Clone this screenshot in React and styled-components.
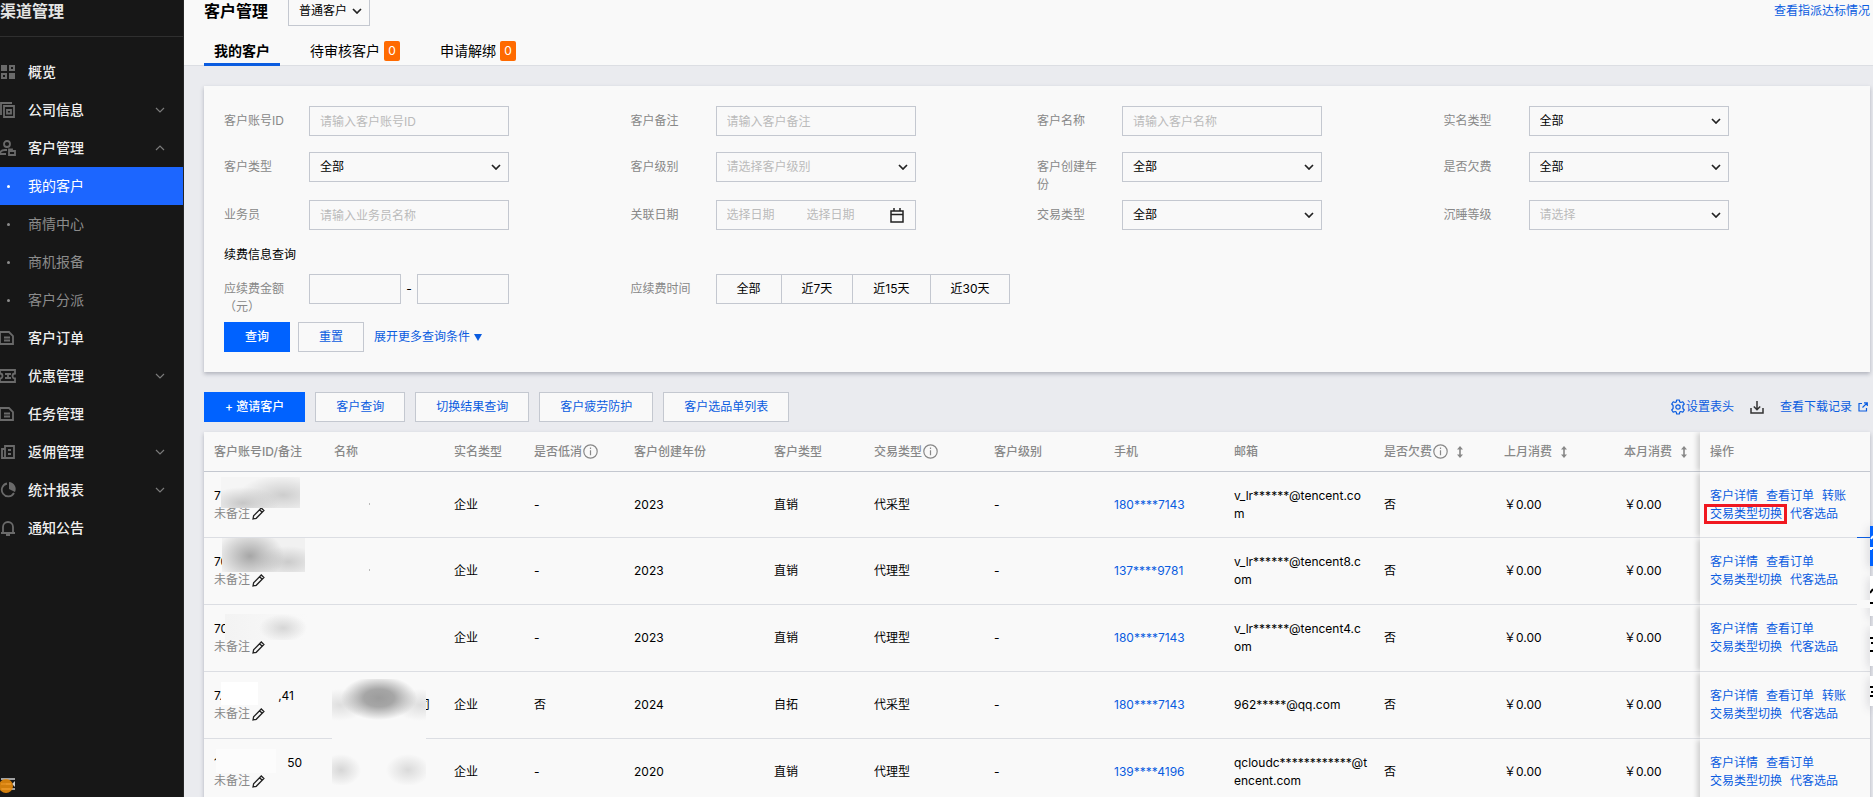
import React from "react";
import styled, { createGlobalStyle, css } from "styled-components";

const link = "#0a5ce0";
const primary = "#0062ff";
const border = "#c4c8d0";
const panel = "#f9f9f9";

const menu = [
  { icon: "grid", text: "概览" },
  { icon: "copy", text: "公司信息", arrow: "down" },
  { icon: "user", text: "客户管理", arrow: "up" },
  { sub: true, text: "我的客户", active: true },
  { sub: true, text: "商情中心" },
  { sub: true, text: "商机报备" },
  { sub: true, text: "客户分派" },
  { icon: "doc", text: "客户订单" },
  { icon: "ticket", text: "优惠管理", arrow: "down" },
  { icon: "doc", text: "任务管理" },
  { icon: "book", text: "返佣管理", arrow: "down" },
  { icon: "pie", text: "统计报表", arrow: "down" },
  { icon: "bell", text: "通知公告" },
];

const fields = [
  { id: "accountId", label: "客户账号ID", placeholder: "请输入客户账号ID" },
  { id: "remark", label: "客户备注", placeholder: "请输入客户备注" },
  { id: "name", label: "客户名称", placeholder: "请输入客户名称" },
  { id: "authType", label: "实名类型", select: "全部" },
  { id: "customerType", label: "客户类型", select: "全部" },
  { id: "level", label: "客户级别", select: "请选择客户级别", muted: true },
  { id: "year", label: "客户创建年份", select: "全部" },
  { id: "arrears", label: "是否欠费", select: "全部" },
  { id: "salesman", label: "业务员", placeholder: "请输入业务员名称" },
  { id: "linkDate", label: "关联日期", date: true },
  { id: "tradeType", label: "交易类型", select: "全部" },
  { id: "sleepLevel", label: "沉睡等级", select: "请选择", muted: true },
];

const columns = [
  { title: "客户账号ID/备注", width: 120 },
  { title: "名称", width: 120 },
  { title: "实名类型", width: 80 },
  { title: "是否低消", width: 100, info: true },
  { title: "客户创建年份", width: 140 },
  { title: "客户类型", width: 100 },
  { title: "交易类型", width: 120, info: true },
  { title: "客户级别", width: 120 },
  { title: "手机", width: 120 },
  { title: "邮箱", width: 150 },
  { title: "是否欠费", width: 120, info: true, sort: true },
  { title: "上月消费", width: 120, sort: true },
  { title: "本月消费", width: 86, sort: true },
];

const blob = (x, y, w, h, color) =>
  `radial-gradient(${w}px ${h}px at ${x}px ${y}px, ${color}, transparent)`;

const rows = [
  {
    id: ["7"],
    mask: { x: 17, y: 5, w: 79, h: 31, bg: `${blob(22, 26, 36, 16, "#c6c6c6")}, ${blob(62, 18, 44, 20, "#cdcdcd")}, #f5f5f5` },
    nameMask: { x: 45, y: 31, w: 1, h: 2, bg: "#bbb" },
    low: "-", year: "2023", type: "直销", trade: "代采型",
    phone: "180****7143", mail: "v_lr******@tencent.co\nm", transfer: true, marked: true,
  },
  {
    id: ["70"],
    mask: { x: 18, y: 0, w: 83, h: 34, bg: `${blob(28, 18, 34, 26, "#a6a6a6")}, ${blob(66, 24, 32, 16, "#cbcbcb")}, #f1f1f1` },
    nameMask: { x: 45, y: 31, w: 1, h: 2, bg: "#bbb" },
    low: "-", year: "2023", type: "直销", trade: "代理型",
    phone: "137****9781", mail: "v_lr******@tencent8.c\nom",
  },
  {
    id: ["70"],
    mask: { x: 21, y: 9, w: 82, h: 26, bg: `${blob(58, 14, 24, 14, "#d6d6d6")}, linear-gradient(90deg, #f3f3f3, ${panel})` },
    low: "-", year: "2023", type: "直销", trade: "代理型",
    phone: "180****7143", mail: "v_lr******@tencent4.c\nom",
  },
  {
    id: ["7.", ",41"], idWidth: 80,
    mask: { x: 17, y: 10, w: 37, h: 23, bg: "#ffffff" },
    name: "司",
    nameMask: {
      x: 8, y: 7, w: 94, h: 106,
      bg: `${blob(47, 19, 38, 22, "#9c9c9c, #a6a6a6 40%")}, ${blob(8, 26, 26, 16, "#dedede")}, ${blob(88, 26, 26, 16, "#dedede")}, ${blob(9, 91, 20, 16, "#d6d6d6")}, ${blob(76, 91, 22, 16, "#dadada")}, ${panel}`,
    },
    low: "否", year: "2024", type: "自拓", trade: "代采型",
    phone: "180****7143", mail: "962*****@qq.com", transfer: true,
  },
  {
    id: ["1", "50"], idWidth: 88,
    mask: { x: 12, y: 10, w: 60, h: 24, bg: "#fcfcfc" },
    low: "-", year: "2020", type: "直销", trade: "代理型",
    phone: "139****4196", mail: "qcloudc************@t\nencent.com",
  },
];

const menuIcons = {
  grid: (
    <>
      <path d="M1 1h6v6H1zM9 9h6v6H9z" fill="currentColor" stroke="none" />
      <path d="M10 2h4v4h-4zM2 10h4v4H2z" strokeWidth="2" />
    </>
  ),
  copy: (
    <>
      <path d="M1 13V1h11" />
      <path d="M4 4h10v11H4zM7 8h4v3.500H7z" />
    </>
  ),
  user: (
    <>
      <circle cx="7" cy="4" r="3" />
      <path d="M6 14H0c0-3 2-4 5-4h2M9 11h6v4H9zM9 11V9.500h3V11" />
    </>
  ),
  doc: <path d="M0 2h9l4 4v8H0zM4 7.500h6M4 10.500h6" />,
  ticket: <path d="M0 2h15v3.500a2.500 2.500 0 0 0 0 5V14H0v-3.500a2.500 2.500 0 0 0 0-5zM5 6h6M5 10h6M8 6v4" />,
  book: <path d="M5 2h9v12H5zM5 5H2v9h3M8 6h3M8 10h3" />,
  pie: (
    <>
      <path d="M7 1.500A6.500 6.500 0 1 0 14 11" />
      <path d="M9 0a7 7 0 0 1 6 10L9 7z" fill="currentColor" stroke="none" />
    </>
  ),
  bell: <path d="M1 13h14M3 13V7a5 5 0 0 1 10 0v6M6 15h4" />,
};

const MenuIcon = ({ name }) => (
  <svg width="16" height="16" viewBox="0 0 16 16" fill="none" stroke="currentColor" strokeWidth="1.800">
    {menuIcons[name]}
  </svg>
);

const Chevron = ({ up, width = 1.5 }) => (
  <svg width="10" height="6" viewBox="0 0 10 6" fill="none" stroke="currentColor" strokeWidth={width}>
    <path d={up ? "M1 5l4-4 4 4" : "M1 1l4 4 4-4"} />
  </svg>
);

const InfoIcon = () => (
  <svg width="15" height="15" viewBox="0 0 15 15" fill="none" stroke="currentColor" strokeWidth="1.200">
    <circle cx="7.500" cy="7.500" r="6.700" />
    <path d="M7.500 6.300v5M7.500 3.500v1.500" />
  </svg>
);

const SortIcon = () => (
  <svg width="6" height="12" viewBox="0 0 6 12" fill="currentColor">
    <path d="M3 0l3 3.500H3.800v5H6L3 12 0 8.500h2.200v-5H0z" />
  </svg>
);

const PencilIcon = () => (
  <svg width="13" height="13" viewBox="0 0 13 13" fill="none" stroke="#222" strokeWidth="1.300">
    <path d="M1 12l.6-3.200L9.300 1l2.600 2.500-7.700 7.800zM7.600 2.700l2.600 2.600" />
  </svg>
);

const CalendarIcon = () => (
  <svg width="14" height="15" viewBox="0 0 14 15" fill="none" stroke="#222" strokeWidth="1.500">
    <path d="M1 3h12v11H1zM1 6.500h12M4 0v3M10 0v3" />
  </svg>
);

const GearIcon = () => (
  <svg width="16" height="16" viewBox="0 0 16 16" fill="none" stroke="currentColor" strokeWidth="1.200" strokeLinejoin="round">
    <path d="M6.700 1h2.600l.5 2 1 .500 2-.700 1.500 2.200L12.900 6.500v3l1.400 1.500-1.500 2.200-2-.700-1 .500-.5 2H6.700l-.5-2-1-.500-2 .700L1.700 11l1.400-1.500v-3L1.700 5l1.500-2.200 2 .700 1-.500z" />
    <circle cx="8" cy="8" r="2.200" />
  </svg>
);

const DownloadIcon = () => (
  <svg width="14" height="13" viewBox="0 0 14 13" fill="none" stroke="currentColor" strokeWidth="1.500">
    <path d="M1 7v5h12V7M7 0v8.500M3.800 5.500L7 8.700l3.200-3.200" />
  </svg>
);

const ExternalIcon = () => (
  <svg width="10" height="10" viewBox="0 0 10 10" fill="none" stroke="currentColor" strokeWidth="1.200">
    <path d="M4 1.500H1v7.500h7.500V6M6 .8h3.300v3.300M9.200.8L4.500 5.500" />
  </svg>
);

const SelectBox = ({ id, value, muted }) => (
  <SelectWrap>
    <Select id={id} $muted={muted} defaultValue={value} aria-label={id ? undefined : value}>
      <option>{value}</option>
    </Select>
    <Chevron width={1.7} />
  </SelectWrap>
);

const Field = ({ field }) => (
  <FieldRow>
    <Label htmlFor={field.id}>{field.label}</Label>
    <Control>
      {field.select && <SelectBox id={field.id} value={field.select} muted={field.muted} />}
      {field.placeholder && <Input id={field.id} placeholder={field.placeholder} />}
      {field.date && (
        <DateRange>
          <input id={field.id} placeholder="选择日期" />
          <input aria-label="结束日期" placeholder="选择日期" />
          <CalendarIcon />
        </DateRange>
      )}
    </Control>
  </FieldRow>
);

const Sidebar = () => (
  <Side>
    <SideTitle>渠道管理</SideTitle>
    <Menu>
      {menu.map((item) => (
        <MenuItem key={item.text} href="#" $sub={item.sub} $active={item.active}>
          <MenuMark>{item.sub ? <Dot $active={item.active} /> : <MenuIcon name={item.icon} />}</MenuMark>
          <span>{item.text}</span>
          {item.arrow && <Chevron up={item.arrow === "up"} width={1.2} />}
        </MenuItem>
      ))}
    </Menu>
    <Collapse aria-label="收起">
      <svg width="16" height="18" viewBox="0 0 16 18">
        <path d="M1 3h14M6 8h5M1 13h14" stroke="#d0d0d0" strokeWidth="1.500" />
        <path d="M15 5v6l-3-3z" fill="#d0d0d0" />
        <circle cx="6" cy="10" r="7" fill="#e58a0c" fillOpacity="0.900" />
        <path d="M1 8h10M2 13h8" stroke="#f09a2a" />
      </svg>
    </Collapse>
  </Side>
);

const CustomerTable = () => (
  <Table>
    <colgroup>
      {columns.map((col) => (
        <Col key={col.title} $width={col.width} />
      ))}
      <Col $width={170} />
    </colgroup>
    <thead>
      <tr>
        {columns.map((col) => (
          <Th key={col.title}>
            <ThInner>
              {col.title}
              {col.info && <InfoIcon />}
              {col.sort && (
                <SortButton aria-label="排序">
                  <SortIcon />
                </SortButton>
              )}
            </ThInner>
          </Th>
        ))}
        <Th $fixed>操作</Th>
      </tr>
    </thead>
    <tbody>
      {rows.map((row) => (
        <Row key={row.mail}>
          <Td>
            {row.mask && <Mask $area={row.mask} />}
            <IdLine $width={row.idWidth}>
              {row.id.map((part) => (
                <span key={part}>{part}</span>
              ))}
            </IdLine>
            <Remark>
              未备注
              <PencilIcon />
            </Remark>
          </Td>
          <Td>
            {row.nameMask && <Mask $area={row.nameMask} />}
            {row.name && <NameTail>{row.name}</NameTail>}
          </Td>
          <Td>企业</Td>
          <Td>{row.low}</Td>
          <Td>{row.year}</Td>
          <Td>{row.type}</Td>
          <Td>{row.trade}</Td>
          <Td>-</Td>
          <Td>
            <Link href="#">{row.phone}</Link>
          </Td>
          <Td>{row.mail}</Td>
          <Td>否</Td>
          <Td>￥0.00</Td>
          <Td>￥0.00</Td>
          <Td $fixed>
            <Ops>
              <Link href="#">客户详情</Link>
              <Link href="#">查看订单</Link>
              {row.transfer && <Link href="#">转账</Link>}
            </Ops>
            <Ops>
              <Link href="#" $marked={row.marked}>
                交易类型切换
              </Link>
              <Link href="#">代客选品</Link>
            </Ops>
          </Td>
        </Row>
      ))}
    </tbody>
  </Table>
);

const App = () => (
  <Layout>
    <GlobalStyle />
    <Sidebar />
    <Main>
      <Header>
        <HeaderTop>
          <h1>客户管理</h1>
          <HeaderSelect>
            <SelectBox value="普通客户" />
          </HeaderSelect>
          <Link href="#">查看指派达标情况</Link>
        </HeaderTop>
        <Tabs>
          <Tab $active>我的客户</Tab>
          <Tab>
            待审核客户<Badge>0</Badge>
          </Tab>
          <Tab>
            申请解绑<Badge>0</Badge>
          </Tab>
        </Tabs>
      </Header>
      <Body>
        <FilterCard>
          <FieldGrid>
            {fields.map((field) => (
              <Field key={field.id} field={field} />
            ))}
          </FieldGrid>
          <SectionTitle>续费信息查询</SectionTitle>
          <FieldGrid>
            <FieldRow>
              <Label htmlFor="amountFrom">应续费金额（元）</Label>
              <Control>
                <Amount>
                  <Input id="amountFrom" />
                  <span>-</span>
                  <Input aria-label="最高金额" />
                </Amount>
              </Control>
            </FieldRow>
            <FieldRow>
              <Label as="span">应续费时间</Label>
              <Segments>
                <button type="button">全部</button>
                <button type="button">近7天</button>
                <button type="button">近15天</button>
                <button type="button">近30天</button>
              </Segments>
            </FieldRow>
          </FieldGrid>
          <FormActions>
            <Button $primary>查询</Button>
            <Button>重置</Button>
            <More href="#">
              展开更多查询条件
              <svg width="8" height="7" viewBox="0 0 8 7" fill="currentColor">
                <path d="M0 0h8L4 7z" />
              </svg>
            </More>
          </FormActions>
        </FilterCard>
        <Toolbar>
          <Button $primary>+ 邀请客户</Button>
          <Button>客户查询</Button>
          <Button>切换结果查询</Button>
          <Button>客户疲劳防护</Button>
          <Button>客户选品单列表</Button>
          <Tools>
            <ToolLink href="#">
              <GearIcon />
              设置表头
            </ToolLink>
            <IconButton aria-label="下载">
              <DownloadIcon />
            </IconButton>
            <ToolLink href="#" $gap={6}>
              查看下载记录
              <ExternalIcon />
            </ToolLink>
          </Tools>
        </Toolbar>
        <CustomerTable />
      </Body>
    </Main>
    <Dock>
      <DockItem $primary>
        <svg width="3" height="40">
          <path d="M3 10L1 13M1 22h2M1 21v3" stroke="#fff" strokeWidth="2" />
        </svg>
      </DockItem>
      <DockItem>
        <svg width="3" height="40">
          <path d="M0 17l3-4M0 27h3" stroke="#000" strokeWidth="2" />
        </svg>
      </DockItem>
      <DockItem>
        <svg width="3" height="40">
          <path d="M0 12h3M1 17h2M0 25h3" stroke="#000" strokeWidth="2" />
        </svg>
      </DockItem>
      <DockItem $short>
        <svg width="3" height="30">
          <path d="M0 11h3M1 16h2M0 20h3" stroke="#000" strokeWidth="2" />
        </svg>
      </DockItem>
    </Dock>
  </Layout>
);

const GlobalStyle = createGlobalStyle`
  * {
    box-sizing: border-box;
  }
  body {
    margin: 0;
    overflow: hidden;
    color: #000;
    font-family: Inter, "Noto Sans CJK SC", sans-serif;
    font-size: 12px;
    line-height: 18px;
  }
  button, input, select {
    font: inherit;
    color: inherit;
    border-radius: 0;
    outline: none;
  }
  button {
    cursor: pointer;
  }
  a {
    text-decoration: none;
  }
  svg {
    flex: none;
  }
`;

const Layout = styled.div`
  display: flex;
  height: 100vh;
  overflow: hidden;
  background: #eaebef;
`;

const Side = styled.aside`
  display: flex;
  flex-direction: column;
  flex: none;
  width: 184px;
  background: #171717;
  border-right: 1px solid #262626;
`;

const SideTitle = styled.div`
  height: 37px;
  border-bottom: 1px solid #2f2f2f;
  color: #e4e4e4;
  font-size: 16px;
  font-weight: 700;
  line-height: 22px;
`;

const Menu = styled.nav`
  flex: 1;
  padding-top: 16px;
`;

const MenuItem = styled.a`
  display: flex;
  align-items: center;
  gap: 12px;
  height: 38px;
  padding-right: 18px;
  color: ${(p) => (p.$sub ? "#8c8c8c" : "#f0f0f0")};
  font-size: 14px;
  font-weight: ${(p) => (p.$sub ? 400 : 500)};
  & > svg {
    margin-left: auto;
    color: #7a7a7a;
  }
  ${(p) =>
    p.$active &&
    css`
      background: #1c66ff;
      color: #fff;
    `}
`;

const MenuMark = styled.span`
  display: flex;
  flex: none;
  justify-content: center;
  width: 16px;
  color: #6a6a6a;
`;

const Dot = styled.i`
  width: 3px;
  height: 3px;
  border-radius: 50%;
  background: ${(p) => (p.$active ? "#fff" : "#8c8c8c")};
`;

const Collapse = styled.button`
  width: 24px;
  height: 21px;
  padding: 0;
  border: 0;
  background: none;
  text-align: left;
`;

const Main = styled.main`
  flex: 1;
  min-width: 0;
`;

const Header = styled.header`
  padding: 0 3px 0 20px;
  background: ${panel};
  border-bottom: 1px solid #dcdee3;
`;

const HeaderTop = styled.div`
  display: flex;
  align-items: center;
  height: 22px;
  h1 {
    margin: 0;
    font-size: 16px;
    font-weight: 700;
  }
  & > a {
    margin-left: auto;
  }
`;

const HeaderSelect = styled.div`
  width: 82px;
  margin-left: 20px;
`;

const Tabs = styled.div`
  display: flex;
  gap: 20px;
  margin: 14px 0 -1px;
`;

const Tab = styled.button`
  position: relative;
  display: flex;
  align-items: center;
  gap: 4px;
  height: 30px;
  padding: 0 10px;
  border: 0;
  background: none;
  font-size: 14px;
  font-weight: ${(p) => (p.$active ? 700 : 400)};
  &::after {
    content: "";
    position: absolute;
    left: 0;
    right: 0;
    bottom: 0;
    height: 3px;
    background: ${(p) => (p.$active ? "#0a5ce0" : "none")};
  }
`;

const Badge = styled.span`
  width: 16px;
  height: 20px;
  border-radius: 2px;
  background: #ff6a00;
  color: #fff;
  font-size: 12px;
  line-height: 20px;
`;

const Body = styled.div`
  padding: 20px 3px 0 20px;
`;

const FilterCard = styled.form`
  padding: 20px;
  background: ${panel};
  box-shadow: 0 2px 4px rgba(54, 58, 80, 0.32);
`;

const FieldGrid = styled.div`
  display: grid;
  grid-template-columns: repeat(4, 1fr);
`;

const FieldRow = styled.div`
  display: flex;
  gap: 25px;
`;

const Label = styled.label`
  flex: none;
  width: 60px;
  padding: 6px 0;
  color: #888;
`;

const Control = styled.div`
  width: 200px;
  padding-bottom: 16px;
`;

const box = css`
  width: 100%;
  height: 30px;
  border: 1px solid ${border};
  background: ${panel};
`;

const Input = styled.input`
  ${box}
  display: block;
  padding: 0 10px;
  &::placeholder {
    color: #bbb;
  }
`;

const SelectWrap = styled.div`
  position: relative;
  svg {
    position: absolute;
    top: 12px;
    right: 8px;
    color: #222;
    pointer-events: none;
  }
`;

const Select = styled.select`
  ${box}
  display: block;
  padding: 0 10px;
  appearance: none;
  color: ${(p) => (p.$muted ? "#bbb" : "#000")};
`;

const DateRange = styled.div`
  ${box}
  display: flex;
  align-items: center;
  padding: 0 11px 0 10px;
  input {
    width: 80px;
    padding: 0;
    border: 0;
    background: none;
    &::placeholder {
      color: #bbb;
    }
  }
  svg {
    margin-left: auto;
  }
`;

const SectionTitle = styled.div`
  margin-bottom: 10px;
`;

const Amount = styled.div`
  display: flex;
  align-items: center;
  span {
    flex: none;
    width: 16px;
    text-align: center;
  }
`;

const Segments = styled.div`
  display: flex;
  height: 30px;
  button {
    padding: 0 20px;
    border: 1px solid ${border};
    background: ${panel};
    white-space: nowrap;
  }
  button + button {
    border-left: 0;
  }
`;

const FormActions = styled.div`
  display: flex;
  align-items: center;
  gap: 8px;
`;

const Button = styled.button.attrs({ type: "button" })`
  height: 30px;
  padding: 0 20px;
  border: 1px solid ${(p) => (p.$primary ? primary : border)};
  background: ${(p) => (p.$primary ? primary : panel)};
  color: ${(p) => (p.$primary ? "#fff" : link)};
  font-weight: ${(p) => (p.$primary ? 500 : 400)};
  white-space: nowrap;
`;

const Link = styled.a`
  position: relative;
  color: ${link};
  ${(p) =>
    p.$marked &&
    css`
      &::after {
        content: "";
        position: absolute;
        inset: -1px -5px -1px -6px;
        border: 3px solid #f01820;
      }
    `}
`;

const More = styled(Link)`
  display: flex;
  align-items: center;
  gap: 4px;
  margin-left: 2px;
`;

const Toolbar = styled.div`
  display: flex;
  align-items: center;
  gap: 10px;
  padding: 20px 0 10px;
`;

const Tools = styled.div`
  display: flex;
  align-items: center;
  gap: 16px;
  margin-left: auto;
  padding-right: 2px;
`;

const ToolLink = styled(Link)`
  display: flex;
  align-items: center;
  gap: ${(p) => p.$gap || 0}px;
`;

const IconButton = styled.button`
  display: flex;
  padding: 0;
  border: 0;
  background: none;
  color: #333;
`;

const Table = styled.table`
  width: 100%;
  table-layout: fixed;
  border-collapse: separate;
  border-spacing: 0;
  background: ${panel};
  box-shadow: 0 2px 4px rgba(54, 58, 80, 0.32);
`;

const Col = styled.col`
  width: ${(p) => p.$width}px;
`;

const fixedCell = css`
  background: ${panel};
  box-shadow: -4px 0 5px -1px rgba(0, 0, 0, 0.16);
  clip-path: inset(0 0 0 -10px);
`;

const Th = styled.th`
  height: 40px;
  padding: 0 10px;
  border-bottom: 1px solid ${border};
  color: #888;
  font-weight: 500;
  text-align: left;
  white-space: nowrap;
  ${(p) => p.$fixed && fixedCell}
`;

const ThInner = styled.div`
  display: flex;
  align-items: center;
  gap: 1px;
`;

const SortButton = styled.button`
  display: flex;
  margin-left: 8px;
  padding: 0;
  border: 0;
  background: none;
`;

const Td = styled.td`
  position: relative;
  height: 67px;
  padding: 0 4px 0 10px;
  border-bottom: 1px solid #dcdee3;
  white-space: pre-line;
  word-break: break-all;
  ${(p) => p.$fixed && fixedCell}
`;

const Row = styled.tr`
  &:first-child ${Td} {
    height: 66px;
  }
`;

const Mask = styled.div`
  position: absolute;
  z-index: 1;
  left: ${(p) => p.$area.x}px;
  top: ${(p) => p.$area.y}px;
  width: ${(p) => p.$area.w}px;
  height: ${(p) => p.$area.h}px;
  background: ${(p) => p.$area.bg};
`;

const IdLine = styled.div`
  display: flex;
  justify-content: space-between;
  width: ${(p) => (p.$width ? `${p.$width}px` : "auto")};
`;

const Remark = styled.div`
  display: flex;
  align-items: center;
  gap: 2px;
  color: #888;
`;

const NameTail = styled.div`
  width: 96px;
  text-align: right;
`;

const Ops = styled.div`
  display: flex;
  gap: 8px;
`;

const Dock = styled.div`
  position: fixed;
  top: 526px;
  right: 0;
  display: flex;
  flex-direction: column;
  align-items: flex-end;
  gap: 10px;
  width: 16px;
  &::before,
  &::after {
    content: "";
    position: absolute;
    left: 0;
    width: 13px;
  }
  &::before {
    top: 11px;
    height: 1px;
    background: ${link};
  }
  &::after {
    top: 74px;
    height: 8px;
    background: ${panel};
  }
`;

const DockItem = styled.button`
  width: 3px;
  height: ${(p) => (p.$short ? 30 : 40)}px;
  padding: 0;
  border: 0;
  background: ${(p) => (p.$primary ? primary : "#fff")};
  box-shadow: 0 2px 10px rgba(54, 58, 80, 0.4);
  overflow: hidden;
`;

export default App;
